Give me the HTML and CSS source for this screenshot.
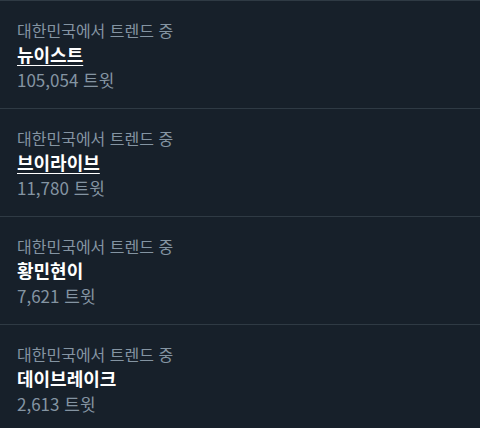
FILE: index.html
```html
<!DOCTYPE html>
<html lang="ko">
<head>
<meta charset="utf-8">
<link rel="stylesheet" href="styles.css">
</head>
<body>
<div class="trends">
  <div class="trend">
    <div class="meta">대한민국에서 트렌드 중</div>
    <div class="name underline">뉴이스트</div>
    <div class="count">105,054 트윗</div>
  </div>
  <div class="trend">
    <div class="meta">대한민국에서 트렌드 중</div>
    <div class="name underline">브이라이브</div>
    <div class="count">11,780 트윗</div>
  </div>
  <div class="trend">
    <div class="meta">대한민국에서 트렌드 중</div>
    <div class="name">황민현이</div>
    <div class="count">7,621 트윗</div>
  </div>
  <div class="trend">
    <div class="meta">대한민국에서 트렌드 중</div>
    <div class="name">데이브레이크</div>
    <div class="count">2,613 트윗</div>
  </div>
</div>
</body>
</html>
```
FILE: styles.css
```css
html, body {
  margin: 0;
  padding: 0;
  background: #17202a;
}
body {
  width: 480px;
  height: 428px;
  overflow: hidden;
  font-family: "Noto Sans CJK KR", "Noto Sans", sans-serif;
}
.trends {
  display: flex;
  flex-direction: column;
  border-top: 1px solid #2f3a44;
}
.trend {
  box-sizing: border-box;
  display: flex;
  flex-direction: column;
  flex: none;
  padding: 17px 17px 0;
  height: 108px;
  border-bottom: 1px solid #2f3a44;
}
.meta {
  color: #8494a2;
  font-size: 16px;
  line-height: 24px;
}
.name {
  color: #ffffff;
  font-size: 18px;
  font-weight: 700;
  line-height: 24px;
}
.name.underline {
  text-decoration: underline;
  text-underline-offset: 3px;
  text-decoration-thickness: 1px;
}
.count {
  color: #8494a2;
  font-size: 17px;
  line-height: 27px;
}
```
